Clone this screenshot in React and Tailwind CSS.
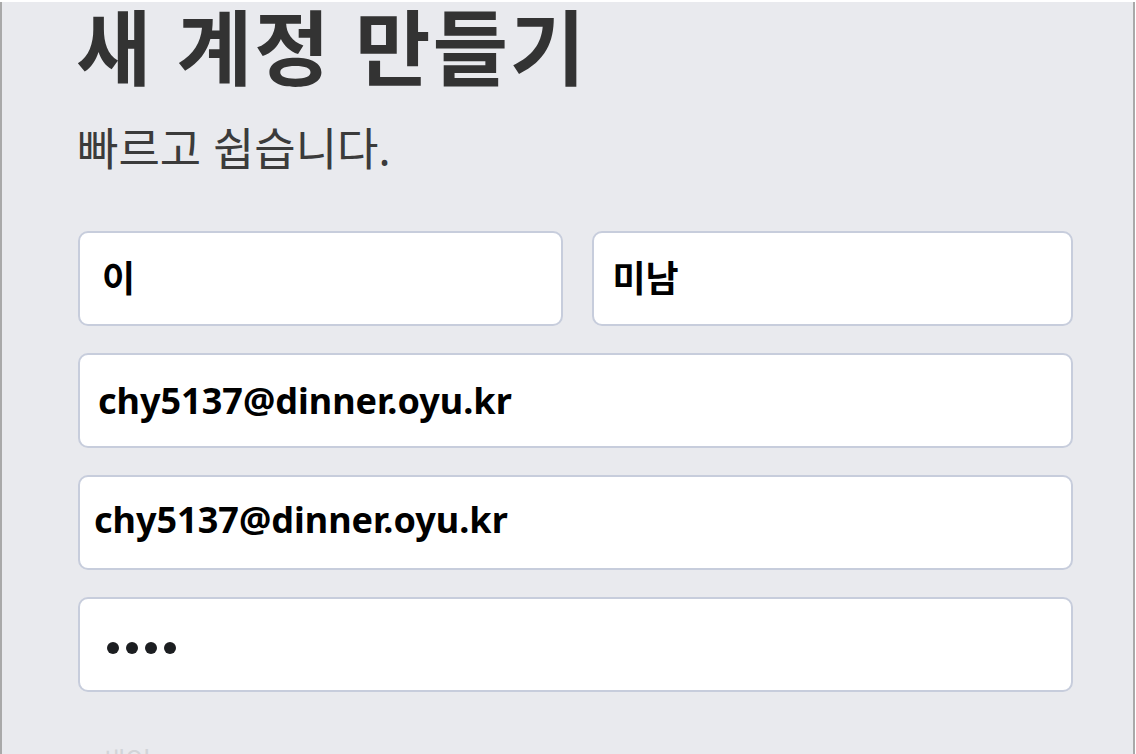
import React from 'react';

const font = { fontFamily: '"Noto Sans", "Noto Sans CJK KR", sans-serif' };

const Field = ({ children, pad = 'pl-[19px]', className = '' }) => (
  <div
    className={`h-[95px] rounded-[10px] border-2 border-[#c7cddc] bg-white flex items-center ${pad} ${className}`}
  >
    {children}
  </div>
);

const App = () => {
  return (
    <div
      className="w-[1136px] h-[754px] bg-white pt-[2px] pr-[1px] overflow-hidden"
      style={font}
    >
      <div className="h-full bg-[#e9eaee] border-l-2 border-r-2 border-[#a9a9a9] pl-[76px] overflow-hidden">
        <div className="w-[995px]">
          {/* 제목 */}
          <h1 className="text-[82px] font-bold leading-[1.1] text-[#333333] -ml-[2px] tracking-[2px]">
            새 계정 만들기
          </h1>
          <p className="text-[45px] leading-none text-[#3b3b3b] mt-[34px] -ml-[1px]">
            빠르고 쉽습니다.
          </p>

          {/* 입력 폼 */}
          <div className="mt-[60px] flex flex-col gap-[27px] text-[36px] font-bold text-black">
            <div className="flex gap-[29px]">
              <Field pad="pl-[22px]" className="flex-1">이</Field>
              <Field pad="pl-[19px]" className="flex-1">미남</Field>
            </div>
            <Field pad="pl-[18px]">chy5137@dinner.oyu.kr</Field>
            <Field pad="pl-[14px]">
              <span className="-mt-[6px]">chy5137@dinner.oyu.kr</span>
            </Field>
            <Field pad="pl-[27px]">
              <div className="flex gap-[7px] mt-[6px]">
                <span className="w-[12px] h-[12px] rounded-full bg-[#1c1e21]" />
                <span className="w-[12px] h-[12px] rounded-full bg-[#1c1e21]" />
                <span className="w-[12px] h-[12px] rounded-full bg-[#1c1e21]" />
                <span className="w-[12px] h-[12px] rounded-full bg-[#1c1e21]" />
              </div>
            </Field>
          </div>

          {/* 다음 항목 라벨 (잘림) */}
          <div className="mt-[56px] ml-[22px] text-[28px] leading-none text-[#d2d4d8]">생일</div>
        </div>
      </div>
    </div>
  );
};

export default App;
